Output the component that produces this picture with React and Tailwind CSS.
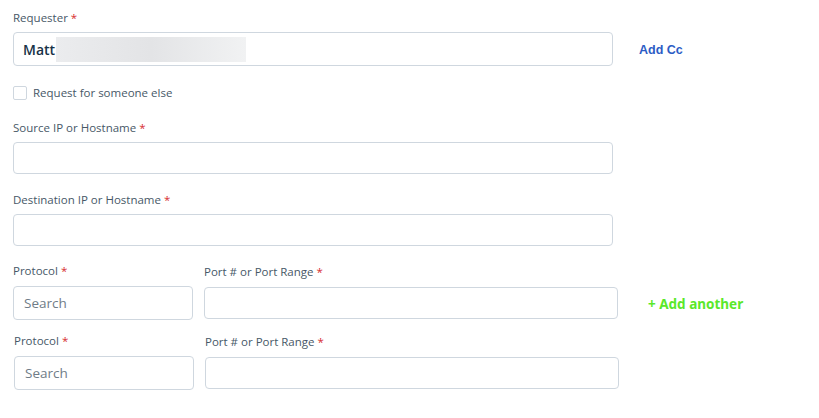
import React from 'react';

const font = { fontFamily: '"Open Sans", "Noto Sans", sans-serif' };

function Label({ children, className = '' }) {
  return (
    <div className={`h-4 text-[11.5px] leading-4 text-[#475867] ${className}`}>
      {children} <span className="text-[#d72d30]">*</span>
    </div>
  );
}

function Field({ className = '', children }) {
  return (
    <div className={`rounded-[4px] border border-[#cfd7df] bg-white ${className}`}>{children}</div>
  );
}

function ProtocolRow({ first }) {
  return (
    <div className={`flex items-start ${first ? 'mt-[17px]' : 'mt-[13px] ml-[1px]'}`}>
      <div className="w-[180px]">
        <Label>Protocol</Label>
        <Field className="mt-[7px] flex h-[34px] items-center px-[10px]">
          <span className="text-[13.5px] text-[#6f7c87]">Search</span>
        </Field>
      </div>
      <div className="ml-[11px] mt-[1px] w-[414px]">
        <Label>Port # or Port Range</Label>
        <Field className="mt-[7px] h-[32px]" />
      </div>
      {first && (
        <div
          className="ml-[30px] mt-[31px] text-[13.5px] font-bold text-[#5ae82a]"
          style={{ fontFamily: '"Noto Sans", sans-serif' }}
        >
          + Add another
        </div>
      )}
    </div>
  );
}

export default function App() {
  return (
    <div className="min-h-[418px] w-[819px] bg-white pl-[13px] pt-[10px]" style={font}>
      <Label>Requester</Label>
      <div className="mt-[6px] flex items-center">
        <Field className="flex h-[34px] w-[600px] items-center pl-[9px]">
          <span className="text-[14px] font-semibold text-[#183247]">Matt</span>
          <div className="ml-[1px] h-[25px] w-[190px] bg-gradient-to-r from-[#ebecee] via-[#e3e4e6] to-[#f1f2f3]" />
        </Field>
        <span
          className="ml-[26px] mt-[2px] text-[12.5px] font-bold text-[#2c5cc5]"
          style={{ fontFamily: '"Liberation Sans", Arial, sans-serif' }}
        >
          Add Cc
        </span>
      </div>

      <label className="mt-[19px] flex h-4 items-center">
        <span className="h-[14px] w-[14px] rounded-[2px] border border-[#cfd7df] bg-white" />
        <span className="ml-[6px] text-[11.5px] text-[#475867]">Request for someone else</span>
      </label>

      <Label className="mt-[19px]">Source IP or Hostname</Label>
      <Field className="mt-[6px] h-[32px] w-[600px]" />

      <Label className="mt-[18px]">Destination IP or Hostname</Label>
      <Field className="mt-[6px] h-[32px] w-[600px]" />

      <ProtocolRow first />
      <ProtocolRow />
    </div>
  );
}
